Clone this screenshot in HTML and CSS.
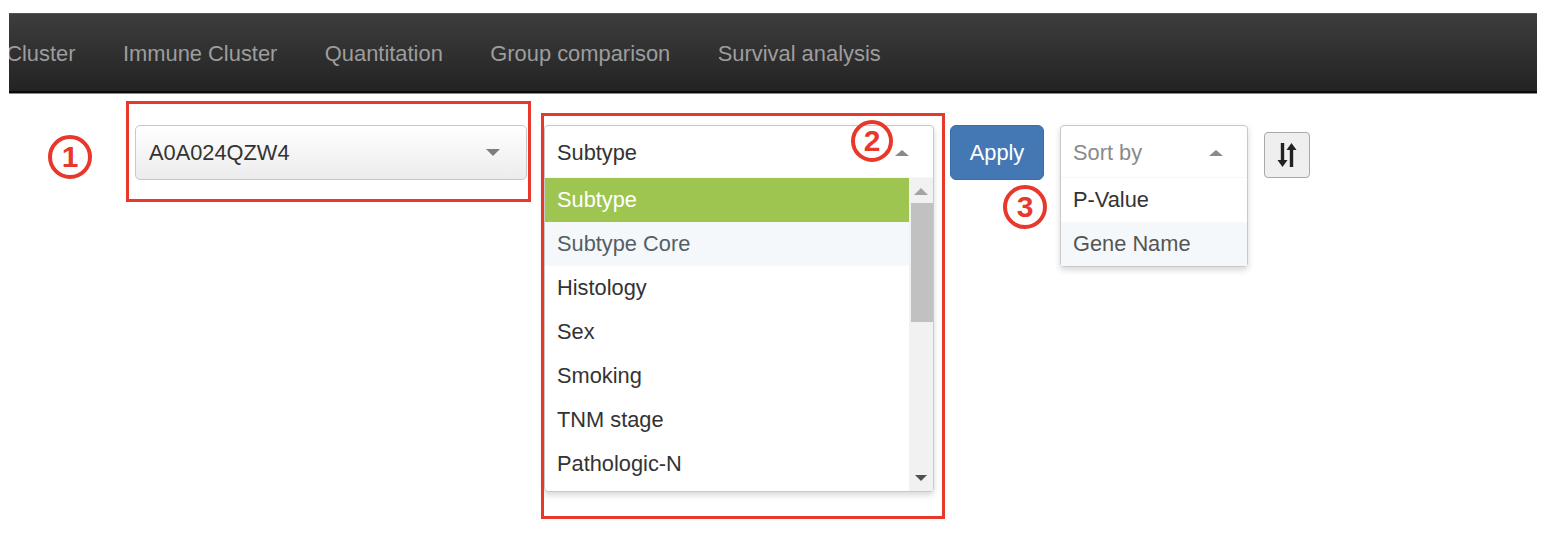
FILE: index.html
```html
<!DOCTYPE html>
<html>
<head>
<meta charset="utf-8">
<link rel="stylesheet" href="styles.css">
</head>
<body>
<nav class="navbar">
  <ul class="nav">
    <li class="nav-item">Cluster</li>
    <li class="nav-item">Immune Cluster</li>
    <li class="nav-item">Quantitation</li>
    <li class="nav-item">Group comparison</li>
    <li class="nav-item">Survival analysis</li>
  </ul>
</nav>
<main class="content">
  <div class="controls">
    <div class="select-btn">
      <span class="select-text">A0A024QZW4</span>
      <span class="caret-down"></span>
    </div>
    <div class="dropdown dropdown-main">
      <div class="dd-header">
        <span class="select-text">Subtype</span>
        <span class="caret-up"></span>
      </div>
      <div class="dd-body">
        <ul class="dd-list">
          <li class="dd-item active">Subtype</li>
          <li class="dd-item hover">Subtype Core</li>
          <li class="dd-item">Histology</li>
          <li class="dd-item">Sex</li>
          <li class="dd-item">Smoking</li>
          <li class="dd-item">TNM stage</li>
          <li class="dd-item">Pathologic-N</li>
        </ul>
        <div class="scrollbar">
          <span class="sb-up"></span>
          <span class="sb-thumb"></span>
          <span class="sb-down"></span>
        </div>
      </div>
    </div>
    <button class="btn-apply">Apply</button>
    <div class="dropdown dropdown-sort">
      <div class="dd-header">
        <span class="select-text placeholder">Sort by</span>
        <span class="caret-up"></span>
      </div>
      <ul class="dd-list">
        <li class="dd-item">P-Value</li>
        <li class="dd-item hover">Gene Name</li>
      </ul>
    </div>
    <button class="btn-sort" aria-label="sort">
      <svg width="20" height="28" viewBox="0 0 20 28">
        <path d="M5.5 2 V22" stroke="#222" stroke-width="3.4" fill="none"/>
        <path d="M0.5 19 L5.5 26 L10.5 19 Z" fill="#222"/>
        <path d="M14.5 26 V6" stroke="#222" stroke-width="3.4" fill="none"/>
        <path d="M9.5 9 L14.5 2 L19.5 9 Z" fill="#222"/>
      </svg>
    </button>
  </div>
  <div class="note note-1"></div>
  <div class="note note-2"></div>
  <div class="badge badge-1">1</div>
  <div class="badge badge-2">2</div>
  <div class="badge badge-3">3</div>
</main>
</body>
</html>
```

FILE: styles.css
```css
* { box-sizing: border-box; }
html, body {
  margin: 0;
  padding: 0;
  background: #fff;
  font-family: "Liberation Sans", Arial, sans-serif;
  color: #333;
}
.navbar {
  margin: 13px 0 0 9px;
  width: 1528px;
  height: 80px;
  background: linear-gradient(#3d3d3d, #232323);
  border-top: 1px solid #5b5244;
  border-bottom: 2px solid #0a0a0a;
  box-shadow: 0 1px 0 #8a8a8a;
  overflow: hidden;
  display: flex;
  align-items: center;
  padding-top: 2px;
}
.nav {
  list-style: none;
  margin: 0 0 0 -26.5px;
  padding: 0;
  display: flex;
}
.nav-item {
  padding: 0 23.7px;
  font-size: 21.9px;
  color: #9d9d9d;
  line-height: 30px;
  white-space: nowrap;
}
.content {
  position: relative;
  padding: 32px 0 0 135px;
  height: 465px;
}
.controls {
  display: flex;
  align-items: flex-start;
}
.select-btn {
  width: 392px;
  height: 55px;
  border: 1px solid #c8c8c8;
  border-radius: 5px;
  background: linear-gradient(#ffffff, #ececec);
  display: flex;
  align-items: center;
  justify-content: space-between;
  padding: 0 26px 0 13px;
}
.select-text {
  font-size: 21.8px;
  color: #333;
  line-height: 30px;
}
.select-text.placeholder { color: #8a8a8a; }
.caret-down {
  width: 0; height: 0;
  border-left: 7px solid transparent;
  border-right: 7px solid transparent;
  border-top: 7px solid #7d7d7d;
}
.caret-up {
  width: 0; height: 0;
  border-left: 7px solid transparent;
  border-right: 7px solid transparent;
  border-bottom: 6px solid #8a8a8a;
}
.dropdown {
  background: #fff;
  border: 1px solid #c9c9c9;
  border-radius: 4px;
  box-shadow: 0 3px 6px rgba(0,0,0,0.16);
}
.dropdown-main {
  margin-left: 17px;
  width: 390px;
}
.dropdown-sort {
  margin-left: 16px;
  width: 188px;
}
.dd-header {
  height: 52px;
  display: flex;
  align-items: center;
  justify-content: space-between;
  padding: 2px 24px 0 12px;
  border-bottom: 1px solid #f7f7f7;
}
.dd-body {
  display: flex;
  height: 313px;
}
.dd-list {
  list-style: none;
  margin: 0;
  padding: 0;
  flex: 1;
  overflow: hidden;
}
.dd-item {
  height: 44px;
  display: flex;
  align-items: center;
  padding: 0 12px;
  font-size: 21.8px;
  color: #333;
  white-space: nowrap;
}
.dd-item.active {
  background: #9dc550;
  color: #fff;
}
.dd-item.hover {
  background: #f5f8fa;
  color: #555e66;
}
.dropdown-sort .dd-item.hover { color: #555; }
.scrollbar {
  width: 24px;
  background: #f1f1f1;
  display: flex;
  flex-direction: column;
  align-items: center;
}
.sb-up {
  margin-top: 10px;
  width: 0; height: 0;
  border-left: 7px solid transparent;
  border-right: 7px solid transparent;
  border-bottom: 7px solid #a3a3a3;
}
.sb-thumb {
  margin-top: 8px;
  margin-left: 2px;
  width: 22px;
  height: 119px;
  background: #c1c1c1;
}
.sb-down {
  margin-top: auto;
  margin-bottom: 10px;
  width: 0; height: 0;
  border-left: 6px solid transparent;
  border-right: 6px solid transparent;
  border-top: 6px solid #505050;
}
.btn-apply {
  margin-left: 16px;
  width: 94px;
  height: 55px;
  border: 1px solid #3b6ca4;
  border-radius: 6px;
  background: #4478b4;
  color: #fff;
  font-family: "Liberation Sans", Arial, sans-serif;
  font-size: 21.8px;
  padding: 0;
}
.btn-sort {
  margin: 7px 0 0 16px;
  width: 46px;
  height: 46px;
  border: 1px solid #a9a9a9;
  border-radius: 4px;
  background: #efefef;
  display: flex;
  align-items: center;
  justify-content: center;
  padding: 0;
}
.note {
  position: absolute;
  border: 3.5px solid #e8382b;
}
.note-1 { left: 126px; top: 8px; width: 405px; height: 101px; }
.note-2 { left: 541px; top: 20px; width: 404px; height: 406px; }
.badge {
  position: absolute;
  width: 44px;
  height: 44px;
  border: 4px solid #e8382b;
  border-radius: 50%;
  color: #e8382b;
  font-family: "Liberation Sans", Arial, sans-serif;
  font-weight: bold;
  font-size: 30px;
  line-height: 1;
  display: flex;
  align-items: center;
  justify-content: center;
  background: #fff;
}
.badge-1 { left: 48px; top: 42px; }
.badge-2 { left: 851px; top: 27px; width: 42px; height: 42px; background: transparent; }
.badge-3 { left: 1003px; top: 92px; }
```
